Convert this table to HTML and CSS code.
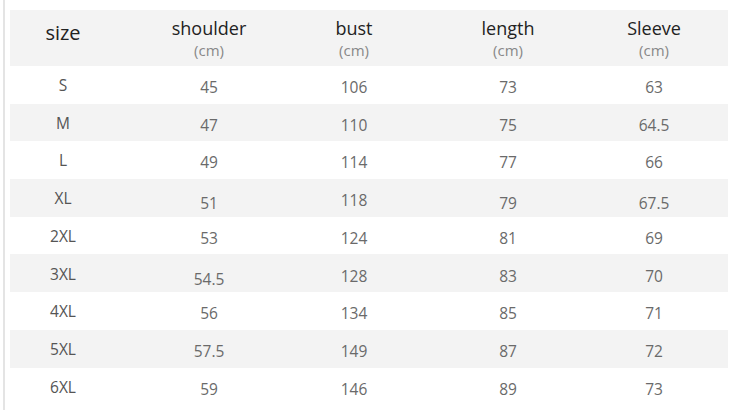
FILE: index.html
```html
<!DOCTYPE html>
<html>
<head>
<meta charset="utf-8">
<link rel="stylesheet" href="styles.css">
</head>
<body>
<div class="frame">
  <div class="table">
    <div class="row head">
      <div class="cell"><span class="title big">size</span></div>
      <div class="cell"><span class="title">shoulder</span><span class="unit">(cm)</span></div>
      <div class="cell"><span class="title">bust</span><span class="unit">(cm)</span></div>
      <div class="cell"><span class="title">length</span><span class="unit">(cm)</span></div>
      <div class="cell"><span class="title">Sleeve</span><span class="unit">(cm)</span></div>
    </div>
    <div class="row"><div class="cell sz">S</div><div class="cell">45</div><div class="cell">106</div><div class="cell">73</div><div class="cell">63</div></div>
    <div class="row alt"><div class="cell sz">M</div><div class="cell">47</div><div class="cell">110</div><div class="cell">75</div><div class="cell">64.5</div></div>
    <div class="row"><div class="cell sz">L</div><div class="cell">49</div><div class="cell">114</div><div class="cell">77</div><div class="cell">66</div></div>
    <div class="row alt"><div class="cell sz">XL</div><div class="cell low">51</div><div class="cell">118</div><div class="cell low">79</div><div class="cell low">67.5</div></div>
    <div class="row"><div class="cell sz">2XL</div><div class="cell">53</div><div class="cell">124</div><div class="cell">81</div><div class="cell">69</div></div>
    <div class="row alt"><div class="cell sz">3XL</div><div class="cell low">54.5</div><div class="cell">128</div><div class="cell">83</div><div class="cell">70</div></div>
    <div class="row"><div class="cell sz">4XL</div><div class="cell">56</div><div class="cell">134</div><div class="cell">85</div><div class="cell">71</div></div>
    <div class="row alt"><div class="cell sz">5XL</div><div class="cell">57.5</div><div class="cell">149</div><div class="cell">87</div><div class="cell">72</div></div>
    <div class="row"><div class="cell sz">6XL</div><div class="cell">59</div><div class="cell">146</div><div class="cell">89</div><div class="cell">73</div></div>
  </div>
</div>
</body>
</html>
```

FILE: styles.css
```css
html, body {
  margin: 0;
  padding: 0;
  background: #ffffff;
}

body {
  font-family: "Open Sans", "DejaVu Sans", sans-serif;
  width: 733px;
  height: 410px;
  overflow: hidden;
}

.frame {
  margin-left: 3px;
  height: 410px;
  border-left: 2px solid #e4e4e4;
  padding-left: 5px;
  padding-top: 10px;
  box-sizing: border-box;
}

.table {
  width: 718px;
  display: flex;
  flex-direction: column;
}

.row {
  display: grid;
  grid-template-columns: 106px 186px 104px 204px 88px 30px;
  height: 37.7px;
  align-items: center;
  color: #6a6a6a;
  font-size: 15.5px;
}

.row.alt,
.row.head {
  background: #f3f3f3;
}

.row.head {
  height: 56px;
}

.cell {
  display: flex;
  flex-direction: column;
  align-items: center;
  justify-content: center;
  line-height: 1;
  position: relative;
  top: 3px;
}

.row.head .cell {
  top: 1px;
}

.cell.sz {
  color: #555555;
  top: 1px;
}

.cell.low {
  top: 6px;
}

.title {
  font-size: 18px;
  color: #222222;
  line-height: 22px;
}

.title.big {
  font-size: 20px;
  position: relative;
  top: -6px;
}

.unit {
  font-size: 15px;
  color: #888888;
  line-height: 22px;
}
```
